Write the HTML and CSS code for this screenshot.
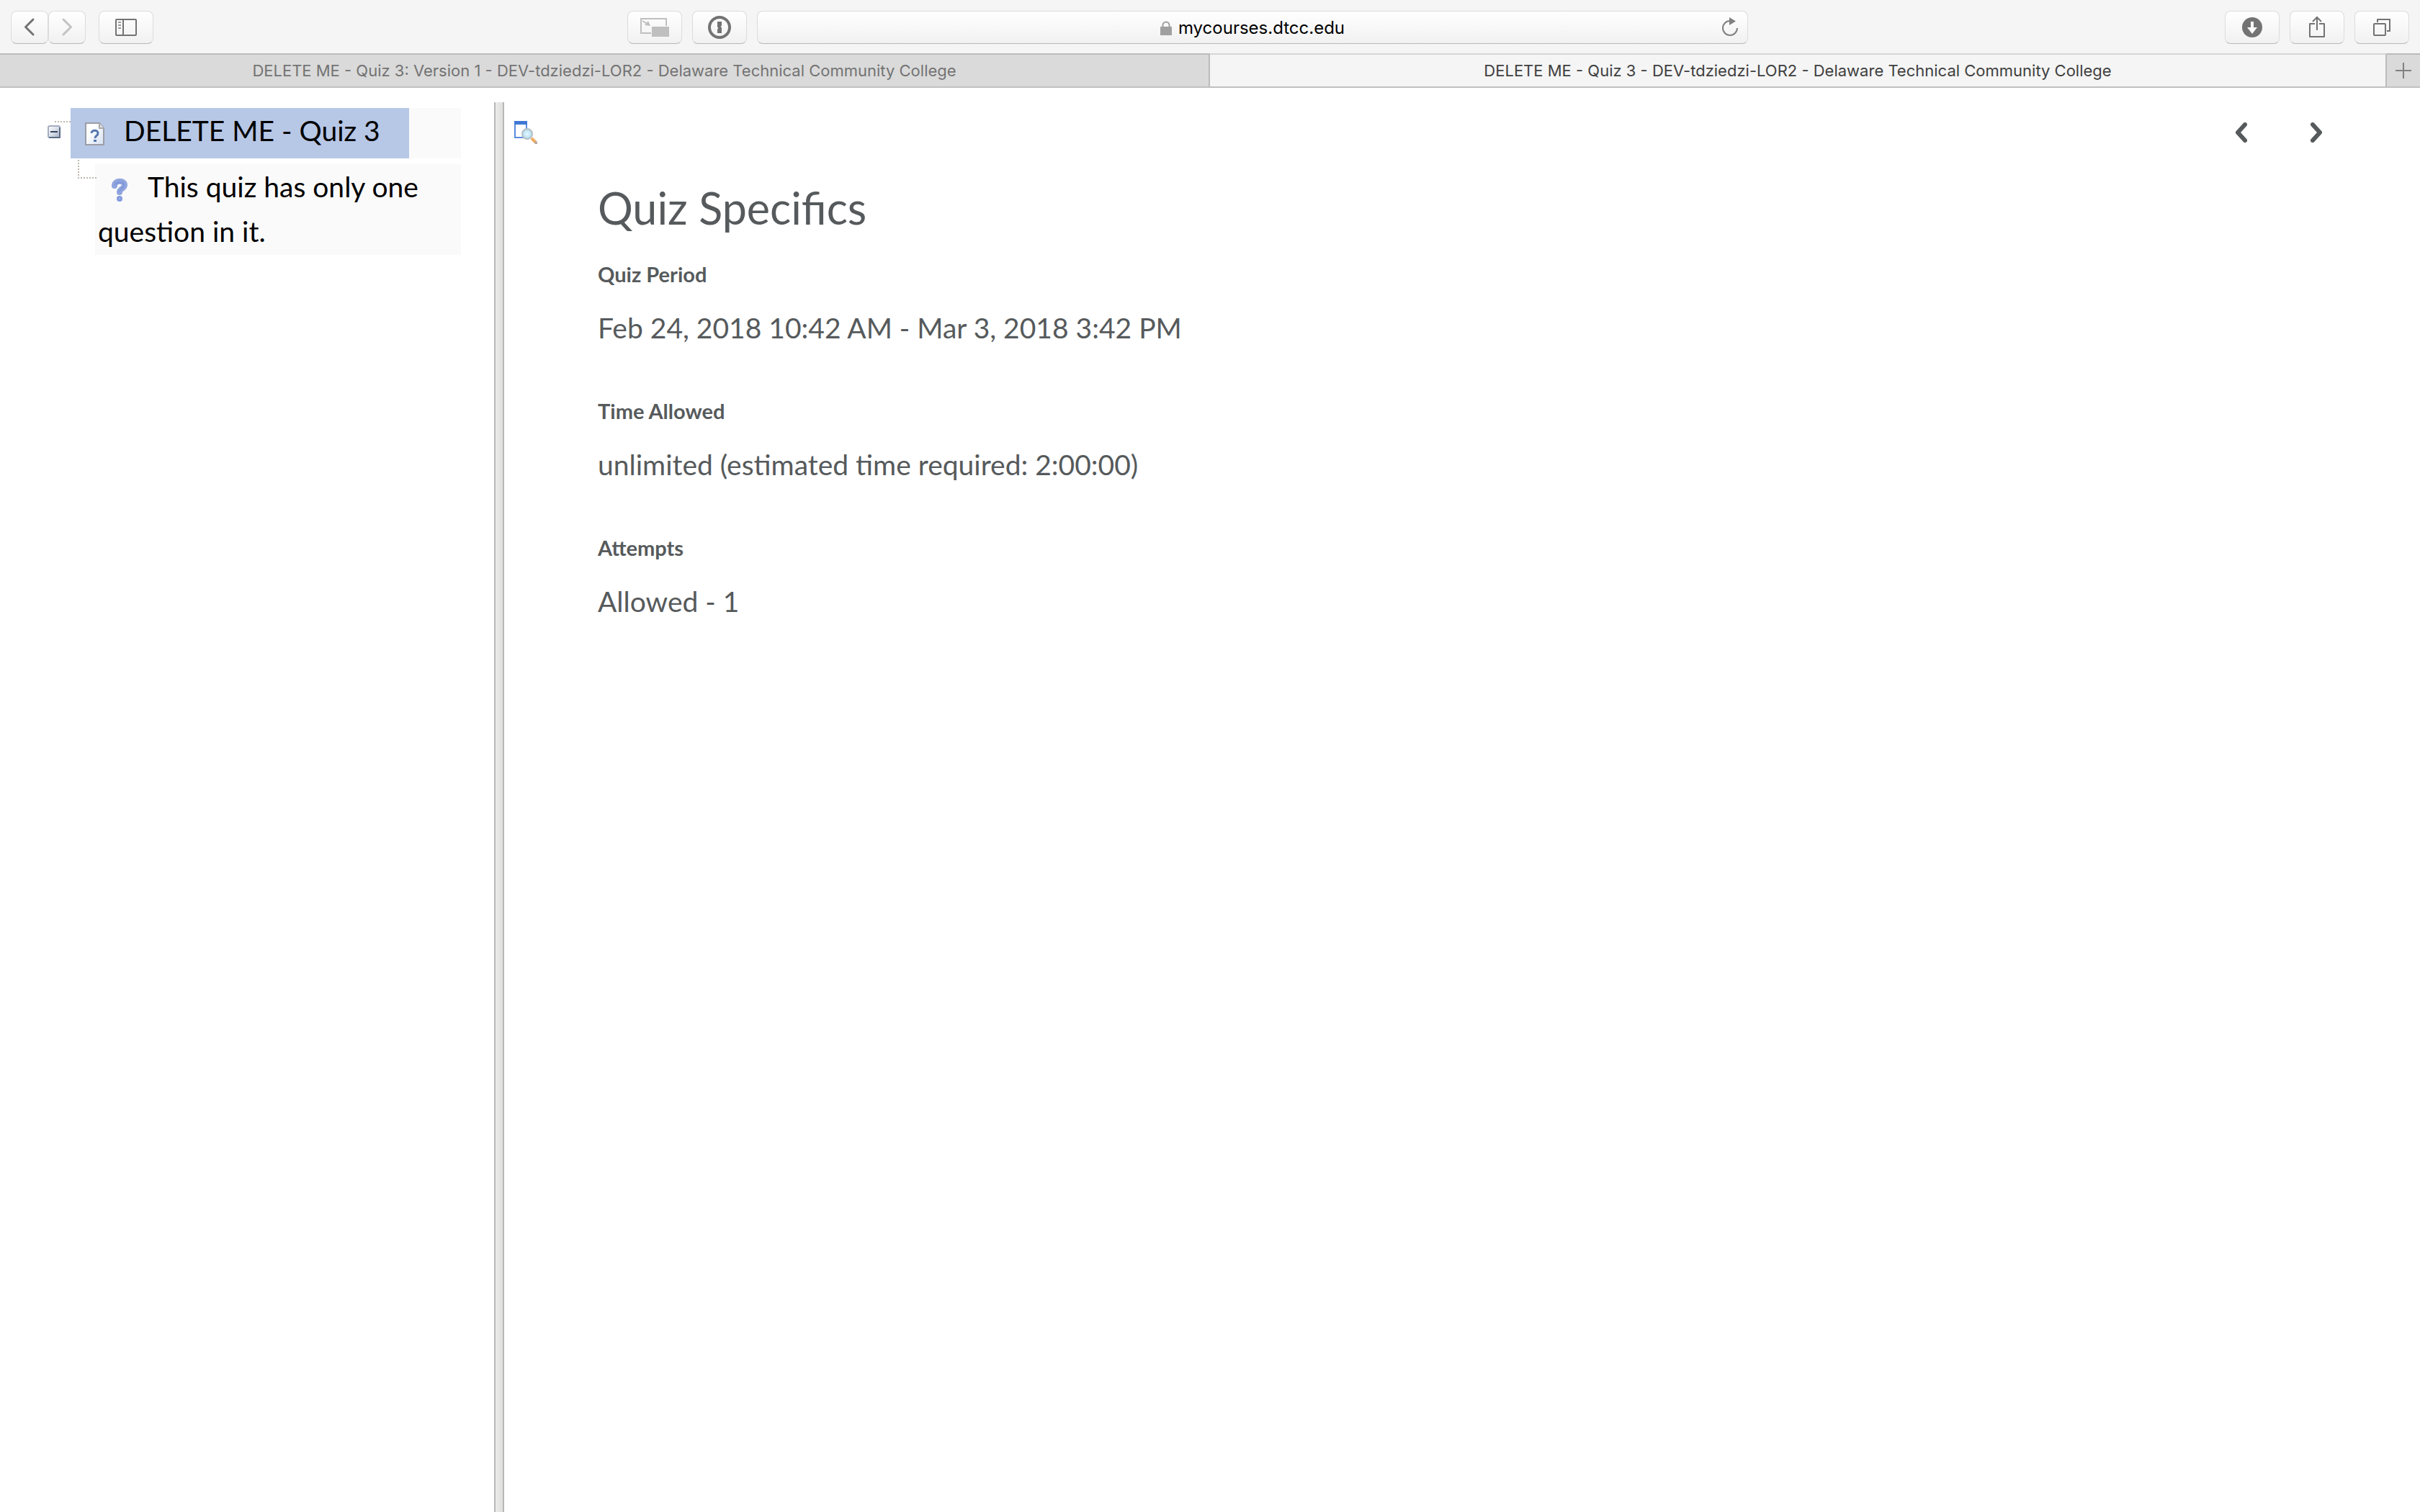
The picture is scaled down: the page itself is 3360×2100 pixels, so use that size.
FILE: index.html
```html
<!DOCTYPE html>
<html lang="en">
<head>
<meta charset="utf-8">
<title>DELETE ME - Quiz 3</title>
<link rel="stylesheet" href="styles.css">
</head>
<body>
<header class="toolbar">
  <div class="group">
    <div class="history">
      <button class="tool tool-small" aria-label="Back"><svg width="52" height="46" viewBox="0 0 52 46"><path d="M31 12 20.500 22.500 31 33" fill="none" stroke="#737373" stroke-width="3" stroke-linecap="round" stroke-linejoin="round"/></svg></button>
      <button class="tool tool-small" aria-label="Forward"><svg width="52" height="46" viewBox="0 0 52 46"><path d="M21 12 31.500 22.500 21 33" fill="none" stroke="#c2c2c2" stroke-width="3" stroke-linecap="round" stroke-linejoin="round"/></svg></button>
    </div>
    <button class="tool" aria-label="Show sidebar"><svg width="76" height="46" viewBox="0 0 76 46" fill="none" stroke="#737373" stroke-width="2"><rect x="24" y="12" width="28" height="22" rx="1"/><path d="M34 12v22"/><path d="M27 16h4M27 20h4M27 24h4" stroke="#999"/></svg></button>
  </div>
  <div class="group center">
    <button class="tool" aria-label="Picture in picture"><svg width="76" height="46" viewBox="0 0 76 46"><path d="M54 21V11H19v20h14" fill="none" stroke="#bfbfbf" stroke-width="2"/><path d="M34 22h24v14H34z" fill="#bfbfbf"/><path d="m21 14 8 5" stroke="#bfbfbf" stroke-width="2"/><path d="m32 21-8-1 5-6z" fill="#bfbfbf"/></svg></button>
    <button class="tool" aria-label="Password manager"><svg width="76" height="46" viewBox="0 0 76 46"><circle cx="38" cy="23" r="14" fill="none" stroke="#737373" stroke-width="4"/><path d="M35 15h6v5.500l-1.500 1.500 1.500 1.500V31h-6v-5.500l1.500-1.500-1.500-1.500z" fill="#737373"/></svg></button>
    <div class="address">
      <button class="site"><svg width="16" height="20" viewBox="0 0 16 20"><path d="M3.500 9V6a4.500 4.500 0 0 1 9 0v3" fill="none" stroke="#a0a0a0" stroke-width="2"/><path d="M0 8h16v12H0z" fill="#a0a0a0"/></svg>mycourses.dtcc.edu</button>
      <button class="reload" aria-label="Reload"><svg width="24" height="28" viewBox="0 0 24 28"><path d="M22 15a10 10 0 1 1-10-10" fill="none" stroke="#808080" stroke-width="2"/><path d="m11 0 9 5.500-9 5.500z" fill="#808080"/></svg></button>
    </div>
  </div>
  <div class="group end">
    <button class="tool" aria-label="Downloads"><svg width="76" height="46" viewBox="0 0 76 46"><circle cx="38" cy="23" r="14" fill="#737373"/><path d="M36 15h4v8h5l-7 9-7-9h5z" fill="#fafafa"/></svg></button>
    <button class="tool" aria-label="Share"><svg width="76" height="46" viewBox="0 0 76 46" fill="none" stroke="#737373" stroke-width="2"><path d="M35 18h-7v18h20V18h-7" stroke-linejoin="round"/><path d="M38 27V9M32 15l6-6 6 6"/></svg></button>
    <button class="tool" aria-label="Show all tabs"><svg width="76" height="46" viewBox="0 0 76 46" fill="none" stroke="#737373" stroke-width="2"><rect x="27" y="18" width="16" height="16" rx="1"/><path d="M32 16v-4h17v16h-4" stroke-linejoin="round"/></svg></button>
  </div>
</header>
<nav class="tabs">
  <button class="tab">DELETE ME - Quiz 3: Version 1 - DEV-tdziedzi-LOR2 - Delaware Technical Community College</button>
  <button class="tab tab-active">DELETE ME - Quiz 3 - DEV-tdziedzi-LOR2 - Delaware Technical Community College</button>
  <button class="tab-new" aria-label="New tab"><svg width="22" height="22" viewBox="0 0 22 22"><path d="M11 0v22M0 11h22" stroke="#808080" stroke-width="2"/></svg></button>
</nav>
<div class="page">
  <aside class="sidebar">
    <ul class="tree">
      <li>
        <div class="row">
          <button class="toggle" aria-label="Collapse"><svg width="18" height="18" viewBox="0 0 18 18"><defs><linearGradient id="box" x1="0" y1="0" x2="1" y2="1"><stop offset="0" stop-color="#fff"/><stop offset=".5" stop-color="#d9dfe9"/><stop offset="1" stop-color="#a2afc4"/></linearGradient></defs><rect x="1" y="1" width="16" height="16" rx="2" fill="url(#box)" stroke="#a5afc1" stroke-width="2"/><path d="M2 17h15V3" fill="none" stroke="#5c6c86" stroke-width="2" stroke-linejoin="round"/><path d="M4 9h10" stroke="#34435e" stroke-width="2"/></svg></button>
          <div class="node">
            <a class="link selected" href="#quiz"><svg class="icon-doc" width="28" height="32" viewBox="0 0 28 32"><defs><linearGradient id="sheet" x1="0" y1="0" x2="1" y2="1"><stop offset=".3" stop-color="#fff"/><stop offset="1" stop-color="#d5e0f2"/></linearGradient></defs><path d="M1 1h19l6 7v23H1z" fill="url(#sheet)" stroke="#9a9ea6" stroke-width="2"/><path d="M20 1v7h6" fill="#e4e4e4" stroke="#aaa" stroke-width="2"/><path d="M9 15c0-5 9-5 9 0 0 4-4 3-4 7" fill="none" stroke="#5577b0" stroke-width="3"/><path d="M12 24h4v3h-4z" fill="#5577b0"/></svg>DELETE ME - Quiz 3</a>
          </div>
        </div>
        <ul class="children">
          <li class="node child"><a class="link" href="#question"><svg class="icon-question" width="22" height="32" viewBox="0 0 22 32"><path d="M4 10C4 2 18 2 18 9c0 5-7 5-7 10" fill="none" stroke="#90a5de" stroke-width="8" stroke-linecap="round"/><path d="M5 9c2-5 12-5 12 0 0 4-6 5-6 9" fill="none" stroke="#7f96d8" stroke-width="2"/><circle cx="11" cy="28" r="4" fill="#839ade"/><circle cx="11" cy="28" r="1" fill="#aebdeb"/></svg>This quiz has only one question in it.</a></li>
        </ul>
      </li>
    </ul>
  </aside>
  <div class="splitter"></div>
  <main class="main">
    <div class="actions">
      <button class="plain" aria-label="Preview"><svg width="32" height="32" viewBox="0 0 32 32"><defs><radialGradient id="lens"><stop offset="0" stop-color="#e5f8ff"/><stop offset="1" stop-color="#afdcf0"/></radialGradient></defs><path d="M1 2h16v21H1z" fill="#fff" stroke="#5b8be0" stroke-width="2"/><path d="M0 0h18v5H0z" fill="#3f78d4"/><path d="m24 24 6 6" stroke="#efac60" stroke-width="4"/><path d="m29 29 3 3" stroke="#b5aaa4" stroke-width="4"/><circle cx="18" cy="18" r="7" fill="url(#lens)" stroke="#b4bfc3" stroke-width="2"/></svg></button>
      <div class="pager">
        <button class="arrow" aria-label="Previous"><svg width="16" height="28" viewBox="0 0 16 28"><path d="M13 3 3 14l10 11" fill="none" stroke="#565a5c" stroke-width="6" stroke-linecap="round" stroke-linejoin="round"/></svg></button>
        <button class="arrow" aria-label="Next"><svg width="16" height="28" viewBox="0 0 16 28"><path d="m3 3 10 11L3 25" fill="none" stroke="#565a5c" stroke-width="6" stroke-linecap="round" stroke-linejoin="round"/></svg></button>
      </div>
    </div>
    <section class="details">
      <h1>Quiz Specifics</h1>
      <dl>
        <dt>Quiz Period</dt>
        <dd>Feb 24, 2018 10:42 AM - Mar 3, 2018 3:42 PM</dd>
        <dt>Time Allowed</dt>
        <dd>unlimited (estimated time required: 2:00:00)</dd>
        <dt>Attempts</dt>
        <dd>Allowed - 1</dd>
      </dl>
    </section>
  </main>
</div>
</body>
</html>
```
FILE: styles.css
```css
* { box-sizing: border-box; }

body {
  margin: 0;
  min-height: 100vh;
  display: flex;
  flex-direction: column;
  background: #fff;
  font-family: Lato, sans-serif;
}

button {
  padding: 0;
  border: 0;
  background: none;
  font: inherit;
  color: inherit;
}

svg { display: block; flex: none; }

/* Browser toolbar */
.toolbar {
  display: grid;
  grid-template-columns: 856fr 1556fr 918fr;
  height: 74px;
  padding: 15px 15px 0;
  background: #f5f5f5;
  font-family: Inter, sans-serif;
}

.group { display: flex; gap: 18px; height: 46px; }
.center { gap: 14px; }
.end { gap: 14px; justify-content: flex-end; }
.history { display: flex; }

.tool,
.address {
  display: flex;
  align-items: center;
  justify-content: center;
  height: 46px;
  border: 1px solid #dcdcdc;
  border-bottom-color: #b8b8b8;
  border-radius: 8px;
  background: linear-gradient(#fff, #f1f1f1);
}

.tool { width: 76px; }
.tool-small { width: 52px; }

.address {
  flex: 1;
  position: relative;
  padding-top: 1px;
  font-size: 24px;
  color: #000;
}

.site { display: flex; align-items: center; gap: 9px; }
.reload { position: absolute; right: 12px; top: 8px; }

/* Tab strip */
.tabs {
  display: flex;
  height: 48px;
  background: #dadada;
  border-bottom: 2px solid #c0c0c0;
  font-family: Inter, sans-serif;
  font-size: 22px;
}

.tab {
  flex: 0 0 50%;
  border-top: 2px solid #bcbcbc;
  border-right: 2px solid #bcbcbc;
  color: #737373;
}

.tab-active {
  flex: 1;
  border-top-color: #d5d5d5;
  background: #f5f5f5;
  color: #404040;
}

.tab-new {
  width: 46px;
  display: flex;
  align-items: center;
  justify-content: center;
  border-top: 2px solid #bcbcbc;
}

/* Page */
.page { flex: 1; display: flex; padding-top: 20px; }

.sidebar {
  flex: 0 0 686px;
  padding: 8px 46px 0 0;
  font-size: 39px;
  line-height: 62px;
}

.tree, .children { margin: 0; padding: 0; list-style: none; }
.row { display: flex; position: relative; }

.toggle { width: 98px; height: 66px; padding-left: 66px; }

.row::before {
  content: "";
  position: absolute;
  left: 76px;
  top: 18px;
  width: 22px;
  border-top: 2px dotted #bdb9ad;
}

.node { flex: 1; background: #fafafa; }
.link { color: #000; text-decoration: none; }
.link svg { display: inline-block; vertical-align: -6px; }

.selected {
  display: inline-block;
  padding: 0 40px 8px 20px;
  background: #b7c7e6;
}

.icon-doc { margin-right: 26px; }

.children { padding: 8px 0 0 132px; }
.child { position: relative; padding: 0 4px 2px; }

.child::before {
  content: "";
  position: absolute;
  left: -24px;
  top: -6px;
  width: 24px;
  height: 24px;
  border-left: 2px dotted #bdb9ad;
  border-bottom: 2px dotted #bdb9ad;
}

.icon-question { margin: 0 28px 0 19px; }

.splitter {
  flex: 0 0 14px;
  border: 2px solid #b8b8b8;
  border-width: 0 2px;
  background: linear-gradient(90deg, #ebebeb, #dfdfde);
}

.main { flex: 1; color: #565a5c; }

.actions {
  display: flex;
  justify-content: space-between;
  align-items: center;
  height: 84px;
  padding: 0 92px 0 14px;
}

.pager { display: flex; }
.arrow { display: flex; justify-content: center; width: 104px; }

.details { padding: 27px 130px; }

h1 { margin: 0 0 36px; font-size: 61px; font-weight: 400; line-height: 72px; }
dl { margin: 0; }
dt { margin-bottom: 30px; font-size: 29px; font-weight: 700; line-height: 40px; }
dd { margin: 0 0 72px; font-size: 39px; line-height: 48px; }
```
